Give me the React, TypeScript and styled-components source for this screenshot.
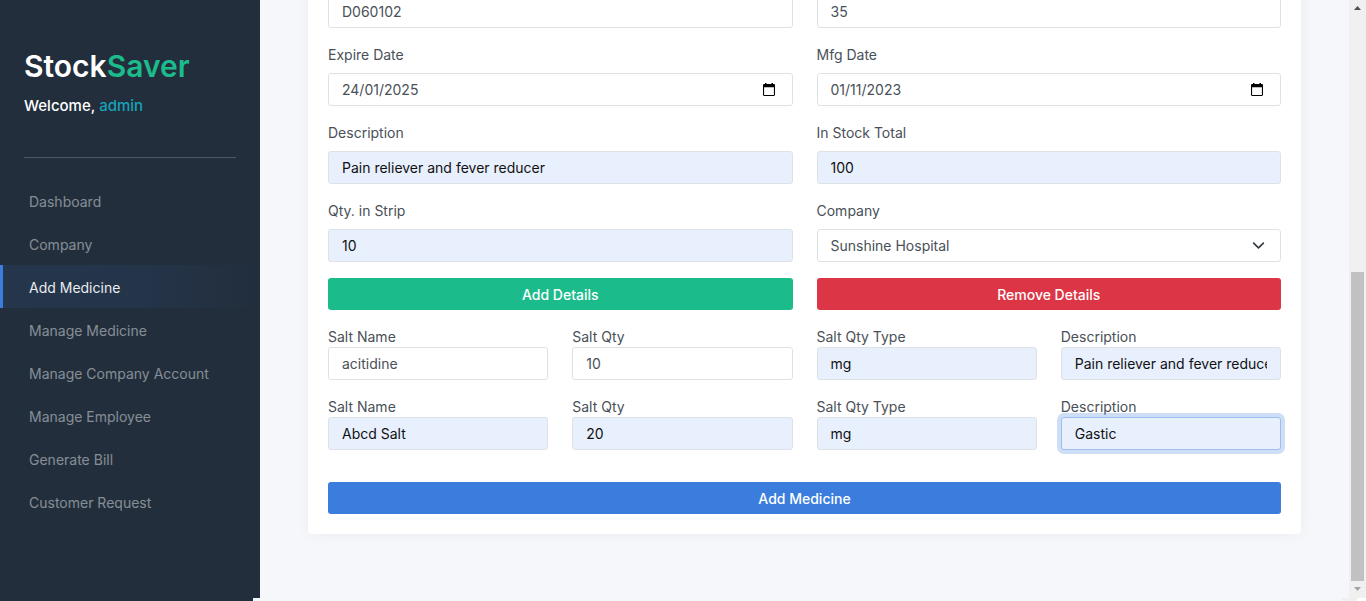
import React from "react";
import styled, { createGlobalStyle, css } from "styled-components";

const GlobalStyle = createGlobalStyle`
  *, *::before, *::after { box-sizing: border-box; }
  body {
    margin: 0;
    background: #f5f7fb;
    color: #495057;
    font-family: Inter, "Liberation Sans", sans-serif;
    font-size: 14px;
    line-height: 21px;
  }
  input, select, button { font: inherit; letter-spacing: inherit; }
`;

const Page = styled.div`
  display: flex;
  flex-direction: column;
  height: 100vh;
  min-height: 560px;
  overflow: hidden;
`;

const Shell = styled.div`
  display: flex;
  flex: 1;
  min-height: 0;
`;

const Sidebar = styled.aside`
  flex: 0 0 260px;
  background: #222e3c;
`;

const Brand = styled.header`
  margin: 0 24px;
  padding: 46px 0 40px;
  border-bottom: 1px solid #4e5863;
`;

const BrandName = styled.h1`
  margin: 0 0 9px;
  color: #fff;
  font-size: 30px;
  font-weight: 600;
  line-height: 40px;
`;

const BrandAccent = styled.span`
  color: #1cbb8c;
`;

const Welcome = styled.p`
  margin: 0;
  color: #fff;
  font-size: 15px;
  font-weight: 500;
  line-height: 22px;
`;

const UserName = styled.span`
  color: #17a2b8;
`;

const Nav = styled.nav`
  display: flex;
  flex-direction: column;
  padding-top: 21px;
`;

const NavLink = styled.a<{ $active?: boolean }>`
  padding: 12px 26px 10px;
  border-left: 3px solid transparent;
  color: rgba(233, 236, 239, 0.5);
  text-decoration: none;
  ${(p) =>
    p.$active &&
    css`
      border-left-color: #3b7ddd;
      color: #e9ecef;
      background: linear-gradient(
        90deg,
        rgba(59, 125, 221, 0.1),
        rgba(59, 125, 221, 0.09) 50%,
        transparent
      );
    `}
`;

const Main = styled.main`
  display: flex;
  flex: 1;
  flex-direction: column;
  justify-content: flex-end;
  min-width: 0;
  padding: 0 48px 64px;
`;

const Card = styled.form`
  flex: none;
  display: flex;
  flex-direction: column;
  gap: 16px;
  padding: 20px;
  border-radius: 4px;
  background: #fff;
  box-shadow: 0 0 14px rgba(33, 37, 41, 0.05);
`;

const Row = styled.div<{ $columns: number }>`
  display: grid;
  grid-template-columns: repeat(${(p) => p.$columns}, minmax(0, 1fr));
  column-gap: 24px;
`;

const Field = styled.div<{ $gap?: number }>`
  display: flex;
  flex-direction: column;
  gap: ${(p) => p.$gap ?? 0}px;
`;

const Label = styled.label`
  display: block;
`;

const control = css`
  width: 100%;
  height: 33px;
  border: 1px solid #dee2e6;
  border-radius: 3px;
  background: #fff;
  color: #495057;
`;

const TextInput = styled.input<{ $filled?: boolean; $focused?: boolean }>`
  ${control}
  padding: 0 13px;
  outline: none;
  ${(p) =>
    p.$filled &&
    css`
      background: #e8f0fe;
      color: #111;
    `}
  ${(p) =>
    p.$focused &&
    css`
      border-color: #9dbeee;
      box-shadow: 0 0 0 4px rgba(59, 125, 221, 0.25);
    `}
`;

const DateBox = styled.div`
  ${control}
  display: flex;
  align-items: center;
  padding: 0 17px 0 13px;
`;

const DateInput = styled.input`
  flex: 1;
  min-width: 0;
  padding: 0;
  border: 0;
  outline: none;
  background: none;
  color: inherit;
`;

const PickerButton = styled.button`
  display: flex;
  padding: 0;
  border: 0;
  background: none;
  color: #000;
`;

const SelectBox = styled.div`
  position: relative;
`;

const Select = styled.select`
  ${control}
  display: block;
  padding: 0 40px 0 13px;
  appearance: none;
`;

const Chevron = styled.svg`
  position: absolute;
  top: 10px;
  right: 16px;
  pointer-events: none;
`;

const Button = styled.button<{ $color: string }>`
  height: 32px;
  padding: 0 14px;
  border: 0;
  border-radius: 3px;
  background: ${(p) => p.$color};
  color: #fff;
  font-weight: 500;
`;

const Submit = styled(Button)`
  margin-top: 16px;
`;

const ScrollTrack = styled.div`
  display: flex;
  flex: 0 0 17px;
  flex-direction: column;
  background: #f0f0f0;
`;

const ScrollArrow = styled.svg`
  flex: none;
`;

const ScrollSpace = styled.div`
  flex: 255;
`;

const ScrollThumb = styled.div`
  flex: 309;
  margin: 0 2px;
  background: #c1c1c1;
`;

const BottomEdge = styled.div`
  display: grid;
  grid-template-columns: 253px 1fr 15px 9px;
  flex: 0 0 3px;
`;

const EdgePart = styled.span<{ $color: string }>`
  background: ${(p) => p.$color};
`;

const links = [
  "Dashboard",
  "Company",
  "Add Medicine",
  "Manage Medicine",
  "Manage Company Account",
  "Manage Employee",
  "Generate Bill",
  "Customer Request",
];

const salts = [
  [
    { label: "Salt Name", value: "acitidine" },
    { label: "Salt Qty", value: "10" },
    { label: "Salt Qty Type", value: "mg", filled: true },
    { label: "Description", value: "Pain reliever and fever reducer", filled: true },
  ],
  [
    { label: "Salt Name", value: "Abcd Salt", filled: true },
    { label: "Salt Qty", value: "20", filled: true },
    { label: "Salt Qty Type", value: "mg", filled: true },
    { label: "Description", value: "Gastic", filled: true, focused: true },
  ],
];

type TextFieldProps = {
  id: string;
  label: string;
  value: string;
  filled?: boolean;
  focused?: boolean;
  gap?: number;
};

function TextField({ id, label, value, filled, focused, gap }: TextFieldProps) {
  return (
    <Field $gap={gap}>
      <Label htmlFor={id}>{label}</Label>
      <TextInput id={id} defaultValue={value} $filled={filled} $focused={focused} />
    </Field>
  );
}

function DateField({ id, label, value }: TextFieldProps) {
  return (
    <Field $gap={8}>
      <Label htmlFor={id}>{label}</Label>
      <DateBox>
        <DateInput id={id} defaultValue={value} />
        <PickerButton type="button" aria-label={`Pick ${label}`}>
          <svg width="12" height="14" viewBox="0 0 12 14" fill="currentColor">
            <path d="M2 0h1.5v1h5V0H10v1h.8c.7 0 1.2.5 1.2 1.2v9.6c0 .7-.5 1.2-1.2 1.2H1.200C.5 13 0 12.500 0 11.800V2.200C0 1.500.5 1 1.200 1H2zM1.100 4.200v7.700h9.800V4.200z" />
          </svg>
        </PickerButton>
      </DateBox>
    </Field>
  );
}

export default function App() {
  return (
    <Page>
      <GlobalStyle />
      <Shell>
        <Sidebar>
          <Brand>
            <BrandName>
              Stock<BrandAccent>Saver</BrandAccent>
            </BrandName>
            <Welcome>
              Welcome, <UserName>admin</UserName>
            </Welcome>
          </Brand>
          <Nav>
            {links.map((name) => (
              <NavLink key={name} href="#" $active={name === "Add Medicine"}>
                {name}
              </NavLink>
            ))}
          </Nav>
        </Sidebar>
        <Main>
          <Card>
            <Row $columns={2}>
              <TextInput aria-label="Batch number" defaultValue="D060102" />
              <TextInput aria-label="Shelf number" defaultValue="35" />
            </Row>
            <Row $columns={2}>
              <DateField id="expire" label="Expire Date" value="24/01/2025" />
              <DateField id="mfg" label="Mfg Date" value="01/11/2023" />
            </Row>
            <Row $columns={2}>
              <TextField
                id="description"
                label="Description"
                value="Pain reliever and fever reducer"
                gap={8}
                filled
              />
              <TextField id="stock" label="In Stock Total" value="100" gap={8} filled />
            </Row>
            <Row $columns={2}>
              <TextField id="strip" label="Qty. in Strip" value="10" gap={8} filled />
              <Field $gap={8}>
                <Label htmlFor="company">Company</Label>
                <SelectBox>
                  <Select id="company">
                    <option>Sunshine Hospital</option>
                  </Select>
                  <Chevron width="13" height="13" viewBox="0 0 16 16" aria-hidden="true">
                    <path
                      d="M2 5l6 6 6-6"
                      fill="none"
                      stroke="#343a40"
                      strokeWidth="2"
                      strokeLinecap="round"
                      strokeLinejoin="round"
                    />
                  </Chevron>
                </SelectBox>
              </Field>
            </Row>
            <Row $columns={2}>
              <Button type="button" $color="#1cbb8c">
                Add Details
              </Button>
              <Button type="button" $color="#dc3545">
                Remove Details
              </Button>
            </Row>
            {salts.map((fields, row) => (
              <Row key={row} $columns={4}>
                {fields.map((field, column) => (
                  <TextField key={column} id={`salt-${row}-${column}`} {...field} />
                ))}
              </Row>
            ))}
            <Submit type="button" $color="#3b7ddd">
              Add Medicine
            </Submit>
          </Card>
        </Main>
        <ScrollTrack aria-hidden="true">
          <ScrollArrow width="17" height="17" viewBox="0 0 17 17">
            <path d="M5 10h7L8.500 6z" fill="#505050" />
          </ScrollArrow>
          <ScrollSpace />
          <ScrollThumb />
          <ScrollArrow width="17" height="17" viewBox="0 0 17 17">
            <path d="M5 6h7L8.500 10z" fill="#a3a3a3" />
          </ScrollArrow>
        </ScrollTrack>
      </Shell>
      <BottomEdge aria-hidden="true">
        <EdgePart $color="#222e3c" />
        <EdgePart $color="#f5f6fa" />
        <EdgePart $color="#f0f0f0" />
        <EdgePart $color="#fff" />
      </BottomEdge>
    </Page>
  );
}
